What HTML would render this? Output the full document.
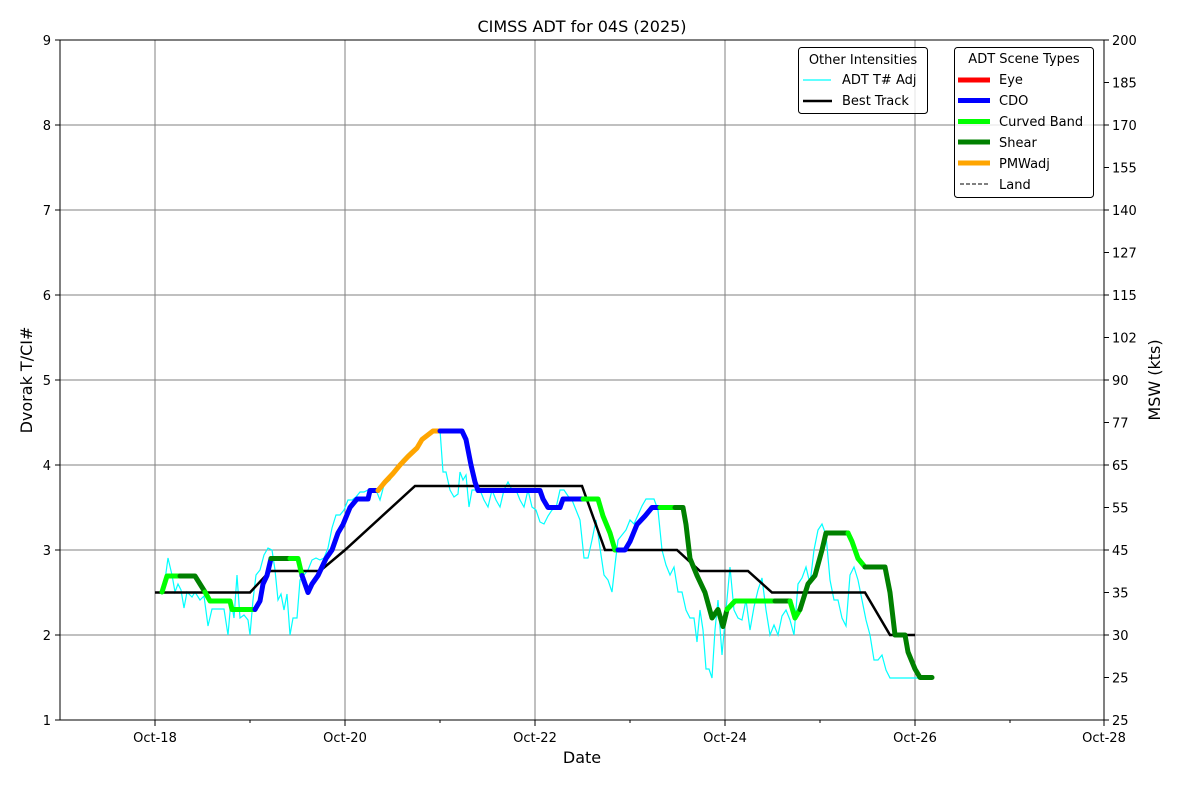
<!DOCTYPE html>
<html><head><meta charset="utf-8"><style>
html,body{margin:0;padding:0;background:#fff;}
svg{display:block;font-family:"DejaVu Sans","Liberation Sans",sans-serif;}
</style></head><body>
<svg width="1200" height="800" viewBox="0 0 1200 800">
<rect width="1200" height="800" fill="#fff"/>
<!-- grid -->
<g stroke="#808080" stroke-width="1">
<line x1="60" y1="635" x2="1104" y2="635"/><line x1="60" y1="550" x2="1104" y2="550"/>
<line x1="60" y1="465" x2="1104" y2="465"/><line x1="60" y1="380" x2="1104" y2="380"/>
<line x1="60" y1="295" x2="1104" y2="295"/><line x1="60" y1="210" x2="1104" y2="210"/>
<line x1="60" y1="125" x2="1104" y2="125"/>
<line x1="155" y1="40" x2="155" y2="720"/><line x1="345" y1="40" x2="345" y2="720"/>
<line x1="535" y1="40" x2="535" y2="720"/><line x1="725" y1="40" x2="725" y2="720"/>
<line x1="915" y1="40" x2="915" y2="720"/>
</g>
<!-- cyan ADT -->
<polyline fill="none" stroke="#00ffff" stroke-width="1.2" points="162,592 165,580 168,558 172,575 175,592 178,584 181,590 184,608 187,592 192,597 195,592 200,600 204,596 208,626 212,609 216,609 220,609 224,609 228,635 231,600 234,618 237,575 240,618 244,615 248,620 250,635 253,600 256,575 260,570 264,555 268,548 272,550 275,570 278,600 281,594 284,610 287,594 290,635 293,618 297,618 300,580 304,575 308,570 312,560 316,558 320,560 324,558 328,548 332,528 336,515 340,515 344,510 348,500 352,500 356,497 360,492 364,492 368,490 372,490 376,490 380,500 384,485 390,480 396,470 402,460 410,452 418,445 424,440 430,433 436,430 440,430 443,472 446,472 450,490 454,497 458,494 460,472 463,480 466,475 469,507 472,490 476,490 480,490 484,500 488,507 492,490 496,500 500,507 504,490 508,482 512,490 516,490 520,500 524,507 528,490 532,507 536,510 540,522 544,524 548,516 552,510 556,508 560,490 564,490 568,496 572,500 576,510 580,520 584,558 588,558 592,540 596,520 600,548 604,575 608,580 612,592 615,565 618,540 622,535 626,530 630,520 634,524 638,515 642,506 646,499 650,499 654,499 658,510 662,550 666,565 670,575 674,567 678,592 682,592 686,610 690,618 694,618 697,642 700,610 703,630 706,669 709,669 712,678 715,630 718,600 722,655 726,610 730,567 734,610 738,618 742,620 746,600 750,630 754,607 758,590 762,578 766,610 770,635 774,625 778,635 782,616 786,610 790,620 794,635 798,584 802,578 806,567 810,584 814,550 818,530 822,524 826,535 830,580 834,600 838,600 842,618 846,626 850,575 854,567 858,580 862,600 866,620 870,635 874,660 878,660 882,655 886,670 890,678 895,678 900,678 905,678 910,678 915,678 920,678"/>
<!-- best track -->
<polyline fill="none" stroke="#000" stroke-width="2.5" points="155,592.5 250,592.5 270,571 320,571 345,550 415,486 582,486 605,550 677,550 700,571 748,571 772,592.5 865,592.5 890,635 915,635"/>
<!-- scene type segments -->
<g fill="none" stroke-width="5" stroke-linejoin="round" stroke-linecap="round">
<polyline stroke="#00ff00" points="162,592 167,576 180,576"/>
<polyline stroke="#008000" points="180,576 195,576 200,584 205,592"/>
<polyline stroke="#00ff00" points="205,592 210,601 230,601 232,609.5 255,609.5"/>
<polyline stroke="#0000ff" points="255,609.5 260,601 263,584 267,575.5 271,558.5"/>
<polyline stroke="#008000" points="271,558.5 290,558.5"/>
<polyline stroke="#00ff00" points="290,558.5 298,558.5 302,575.5"/>
<polyline stroke="#0000ff" points="302,575.5 308,592.5 312,584 318,575.5 322,567 326,558.5 332,550 338,533 343,524.5 350,507.5 357,499 368,499 370,490.5 378,490.5"/>
<polyline stroke="#ffa500" points="378,490.5 385,482 393,473.5 400,465 408,456.5 417,448 422,439.5 433,431 440,431"/>
<polyline stroke="#0000ff" points="440,431 462,431 466,439.5 471,465 475,482 478,490.5 540,490.5 543,499 548,507.5 560,507.5 563,499 583,499"/>
<polyline stroke="#00ff00" points="583,499 598,499 603,516 610,533 615,550 618,550"/>
<polyline stroke="#0000ff" points="618,550 625,550 630,541.5 637,524.5 645,516 652,507.5 660,507.5"/>
<polyline stroke="#00ff00" points="660,507.5 675,507.5"/>
<polyline stroke="#008000" points="675,507.5 683,507.5 686,524.5 690,558.5 697,575.5 705,592.5 712,618 718,609.5 723,626.5 727,609.5"/>
<polyline stroke="#00ff00" points="727,609.5 735,601 775,601"/>
<polyline stroke="#008000" points="775,601 790,601"/>
<polyline stroke="#00ff00" points="790,601 795,618 800,609.5"/>
<polyline stroke="#008000" points="800,609.5 808,584 815,575.5 822,550 826,533 848,533"/>
<polyline stroke="#00ff00" points="848,533 852,541.5 858,558.5 865,567"/>
<polyline stroke="#008000" points="865,567 885,567 890,592.5 895,635 905,635 908,652 915,669 920,677.5 932,677.5"/>
</g>
<!-- axes frame -->
<rect x="60" y="40" width="1044" height="680" fill="none" stroke="#000" stroke-width="1"/>
<!-- ticks -->
<g stroke="#000" stroke-width="1">
<line x1="55" y1="40" x2="60" y2="40"/><line x1="55" y1="125" x2="60" y2="125"/><line x1="55" y1="210" x2="60" y2="210"/><line x1="55" y1="295" x2="60" y2="295"/><line x1="55" y1="380" x2="60" y2="380"/><line x1="55" y1="465" x2="60" y2="465"/><line x1="55" y1="550" x2="60" y2="550"/><line x1="55" y1="635" x2="60" y2="635"/><line x1="55" y1="720" x2="60" y2="720"/>
<line x1="155" y1="720" x2="155" y2="726"/><line x1="345" y1="720" x2="345" y2="726"/><line x1="535" y1="720" x2="535" y2="726"/><line x1="725" y1="720" x2="725" y2="726"/><line x1="915" y1="720" x2="915" y2="726"/><line x1="1104" y1="720" x2="1104" y2="726"/>
<line x1="250" y1="720" x2="250" y2="723"/><line x1="440" y1="720" x2="440" y2="723"/><line x1="630" y1="720" x2="630" y2="723"/><line x1="820" y1="720" x2="820" y2="723"/><line x1="1010" y1="720" x2="1010" y2="723"/>
</g>
<g stroke="#000" stroke-width="1">
<line x1="1104" y1="40" x2="1109" y2="40"/><line x1="1104" y1="82.5" x2="1109" y2="82.5"/><line x1="1104" y1="125" x2="1109" y2="125"/><line x1="1104" y1="167.5" x2="1109" y2="167.5"/><line x1="1104" y1="210" x2="1109" y2="210"/><line x1="1104" y1="252.5" x2="1109" y2="252.5"/><line x1="1104" y1="295" x2="1109" y2="295"/><line x1="1104" y1="337.5" x2="1109" y2="337.5"/><line x1="1104" y1="380" x2="1109" y2="380"/><line x1="1104" y1="422.5" x2="1109" y2="422.5"/><line x1="1104" y1="465" x2="1109" y2="465"/><line x1="1104" y1="507.5" x2="1109" y2="507.5"/><line x1="1104" y1="550" x2="1109" y2="550"/><line x1="1104" y1="592.5" x2="1109" y2="592.5"/><line x1="1104" y1="635" x2="1109" y2="635"/><line x1="1104" y1="677.5" x2="1109" y2="677.5"/><line x1="1104" y1="720" x2="1109" y2="720"/>
</g>
<g font-size="13" fill="#000" text-anchor="end">
<text x="51" y="45">9</text><text x="51" y="130">8</text><text x="51" y="215">7</text><text x="51" y="300">6</text><text x="51" y="385">5</text><text x="51" y="470">4</text><text x="51" y="555">3</text><text x="51" y="640">2</text><text x="51" y="725">1</text>
</g>
<g font-size="13" fill="#000" text-anchor="start">
<text x="1112" y="45">200</text><text x="1112" y="87.5">185</text><text x="1112" y="130">170</text><text x="1112" y="172.5">155</text><text x="1112" y="215">140</text><text x="1112" y="257.5">127</text><text x="1112" y="300">115</text><text x="1112" y="342.5">102</text><text x="1112" y="385">90</text><text x="1112" y="427.5">77</text><text x="1112" y="470">65</text><text x="1112" y="512.5">55</text><text x="1112" y="555">45</text><text x="1112" y="597.5">35</text><text x="1112" y="640">30</text><text x="1112" y="682.5">25</text><text x="1112" y="725">25</text>
</g>
<g font-size="13" fill="#000" text-anchor="middle">
<text x="155" y="742">Oct-18</text><text x="345" y="742">Oct-20</text><text x="535" y="742">Oct-22</text><text x="725" y="742">Oct-24</text><text x="915" y="742">Oct-26</text><text x="1104" y="742">Oct-28</text>
</g>
<text x="582" y="32" font-size="16" text-anchor="middle">CIMSS ADT for 04S (2025)</text>
<text x="582" y="763" font-size="16" text-anchor="middle">Date</text>
<text transform="translate(32,380) rotate(-90)" font-size="16" text-anchor="middle">Dvorak T/CI#</text>
<text transform="translate(1160,380) rotate(-90)" font-size="16" text-anchor="middle">MSW (kts)</text>
<!-- legends -->
<rect x="798.5" y="47.5" width="129" height="66" rx="3" fill="#fff" fill-opacity="0.8" stroke="#000" stroke-width="1"/>
<text x="863" y="64" font-size="13" text-anchor="middle">Other Intensities</text>
<line x1="803" y1="80" x2="831" y2="80" stroke="#00ffff" stroke-width="1.2"/>
<text x="842" y="84" font-size="13">ADT T# Adj</text>
<line x1="803" y1="101" x2="832" y2="101" stroke="#000" stroke-width="2.5"/>
<text x="842" y="105" font-size="13">Best Track</text>
<rect x="954.5" y="47.5" width="139" height="150" rx="3" fill="#fff" fill-opacity="0.8" stroke="#000" stroke-width="1"/>
<text x="1024" y="63" font-size="13" text-anchor="middle">ADT Scene Types</text>
<g stroke-width="5">
<line x1="958" y1="80" x2="990" y2="80" stroke="#ff0000"/>
<line x1="958" y1="100.5" x2="990" y2="100.5" stroke="#0000ff"/>
<line x1="958" y1="121.5" x2="990" y2="121.5" stroke="#00ff00"/>
<line x1="958" y1="142" x2="990" y2="142" stroke="#008000"/>
<line x1="958" y1="163" x2="990" y2="163" stroke="#ffa500"/>
</g>
<line x1="960" y1="184" x2="988" y2="184" stroke="#000" stroke-width="1" stroke-dasharray="4,2"/>
<g font-size="13">
<text x="999" y="84">Eye</text><text x="999" y="105">CDO</text><text x="999" y="126">Curved Band</text><text x="999" y="147">Shear</text><text x="999" y="168">PMWadj</text><text x="999" y="189">Land</text>
</g>
</svg>
</body></html>
